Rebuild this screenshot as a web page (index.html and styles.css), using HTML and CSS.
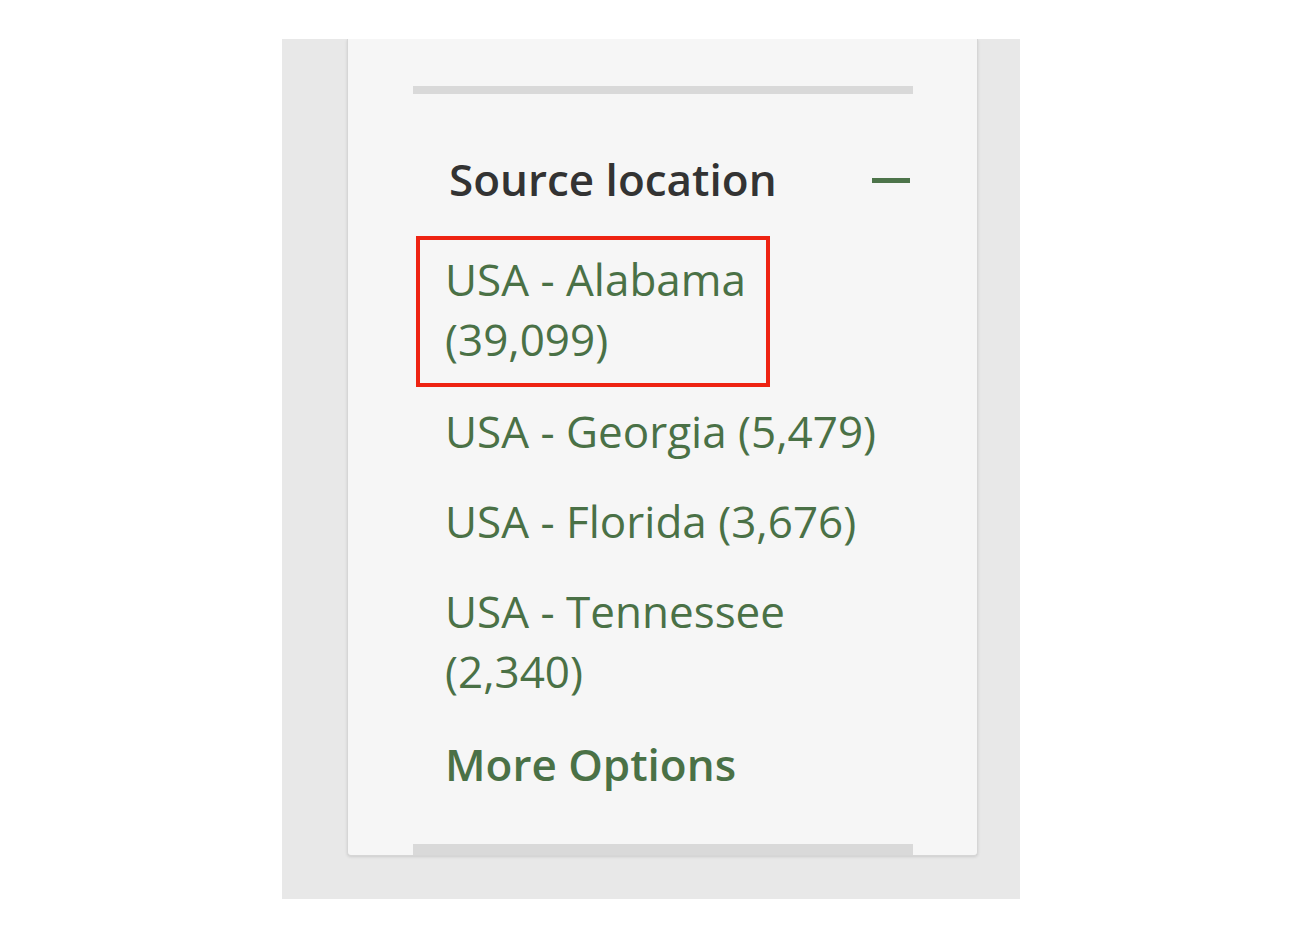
FILE: index.html
```html
<!DOCTYPE html>
<html lang="en">
<head>
<meta charset="utf-8">
<title>Source location</title>
<link rel="stylesheet" href="styles.css">
</head>
<body>
<div class="frame">
  <section class="card">
    <div class="divider"></div>
    <div class="facet-head">
      <h2 class="facet-title">Source location</h2>
      <span class="collapse-icon" aria-label="Collapse"></span>
    </div>
    <ul class="facet-list">
      <li class="facet-item focus"><a href="#">USA - Alabama (39,099)</a></li>
      <li class="facet-item"><a href="#">USA - Georgia (5,479)</a></li>
      <li class="facet-item"><a href="#">USA - Florida (3,676)</a></li>
      <li class="facet-item"><a href="#">USA - Tennessee (2,340)</a></li>
      <li class="facet-item more"><a href="#">More Options</a></li>
    </ul>
    <div class="bottom-bar"></div>
  </section>
</div>
</body>
</html>
```
FILE: styles.css
```css
* { box-sizing: border-box; }
html, body {
  margin: 0;
  padding: 0;
  background: #ffffff;
}
body {
  font-family: "Open Sans", "Liberation Sans", sans-serif;
}
.frame {
  margin: 39px 0 0 282px;
  width: 738px;
  height: 860px;
  background: #e8e8e8;
  padding-left: 65px;
  overflow: hidden;
}
.card {
  width: 631px;
  background: #f6f6f6;
  border: 1px solid #d6d6d6;
  border-top: none;
  border-radius: 0 0 4px 4px;
  box-shadow: 0 1px 3px rgba(0, 0, 0, 0.12);
  padding: 47px 64px 0 65px;
}
.divider {
  height: 8px;
  background: #d9d9d9;
}
.facet-head {
  margin-top: 55px;
  display: flex;
  align-items: center;
  justify-content: space-between;
  height: 60px;
  padding-left: 36px;
  padding-right: 3px;
}
.facet-title {
  margin: 0;
  font-size: 44px;
  line-height: 60px;
  font-weight: 600;
  color: #333333;
}
.collapse-icon {
  display: block;
  width: 38px;
  height: 5px;
  background: #4d744a;
  margin-top: 2px;
}
.facet-list {
  list-style: none;
  margin: 40px 0 0 0;
  padding: 0 0 0 32px;
  display: flex;
  flex-direction: column;
  gap: 30px;
}
.facet-item {
  font-size: 44px;
  line-height: 60px;
}
.facet-item a {
  color: #4a7146;
  text-decoration: none;
}
.facet-item.focus {
  width: 354px;
  margin: -13px 0 -16px -29px;
  padding: 9px 8px 14px 25px;
  border: 4px solid #ee2312;
}
.facet-item.more {
  margin-top: 3px;
  font-weight: 600;
}
.bottom-bar {
  margin-top: 50px;
  height: 11px;
  background: #d9d9d9;
}
```
